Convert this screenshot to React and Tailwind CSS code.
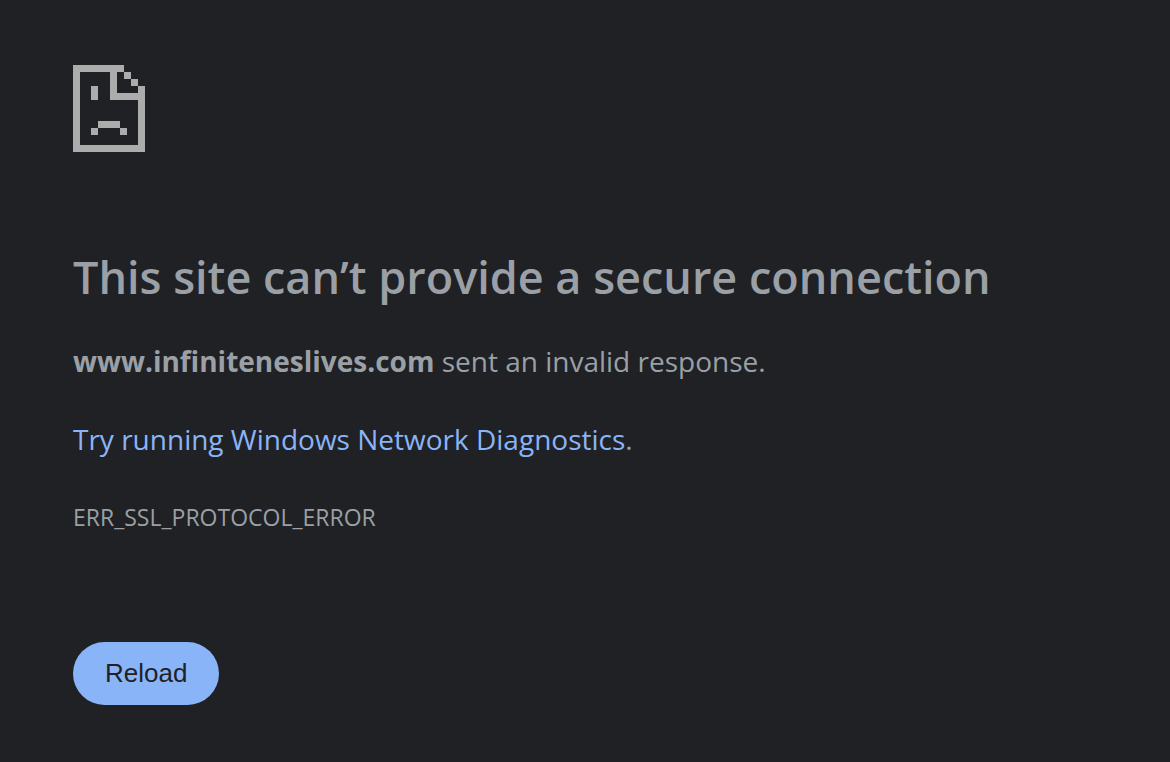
import React from "react";

const SadPageIcon = () => (
  <svg
    className="w-[72px] h-[87px] text-[#acacac]"
    viewBox="0 0 72 87"
    fill="currentColor"
    shapeRendering="crispEdges"
    aria-hidden="true"
  >
    {/* Page outline */}
    <path d="M0 0H51V7H7V80H65V35H37V7H44V28H65V21H72V87H0Z" />
    {/* Folded corner */}
    <path d="M51 7H58V14H51ZM58 14H65V21H58Z" />
    {/* Face */}
    <path d="M18 21H25V35H18ZM25 56H47V63H25ZM18 63H25V70H18ZM47 63H54V70H47Z" />
  </svg>
);

const App = () => {
  const handleReload = () => {
    window.location.reload();
  };

  return (
    <div className="min-h-screen bg-[#202124] text-[#9aa0a6] font-['Segoe_UI','Open_Sans',sans-serif]">
      <main className="px-[73px] pt-[65px] pb-14">
        <SadPageIcon />

        <h1 className="mt-24 text-[45px] leading-[58px] font-semibold">
          This site can’t provide a secure connection
        </h1>

        <p className="mt-9 text-[28px] leading-[38px]">
          <strong className="font-bold">www.infiniteneslives.com</strong> sent an invalid response.
        </p>

        <p className="mt-10 text-[28px] leading-[38px]">
          <a href="#diagnostics" className="text-[#8ab4f8]">
            Try running Windows Network Diagnostics
          </a>
          .
        </p>

        <p className="mt-10 text-[23px] leading-[38px]">ERR_SSL_PROTOCOL_ERROR</p>

        <button
          type="button"
          onClick={handleReload}
          className="mt-[106px] h-[63px] px-8 rounded-full bg-[#8ab4f8] text-[#202124] text-[26px] font-['Liberation_Sans',Arial,sans-serif]"
        >
          Reload
        </button>
      </main>
    </div>
  );
};

export default App;
